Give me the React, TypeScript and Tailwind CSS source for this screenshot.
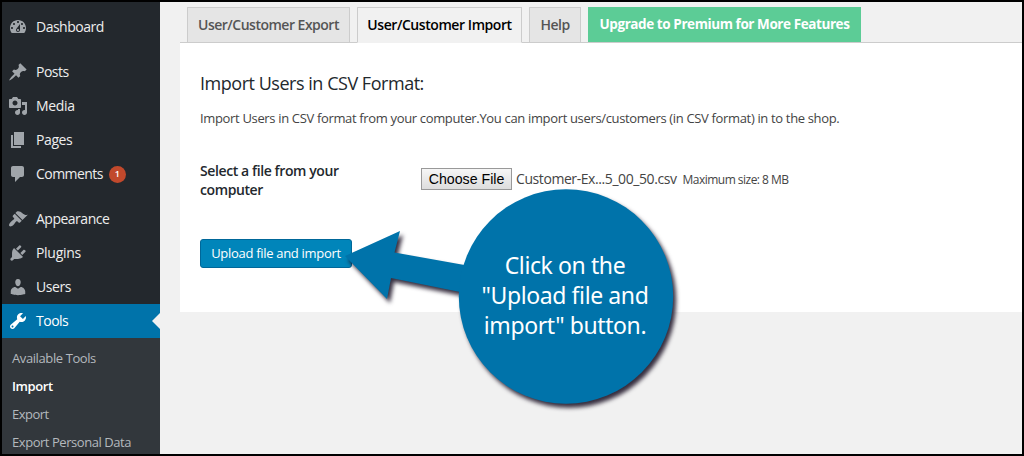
import clsx from "clsx";

type MenuItemType = {
  label: string;
  icon: string;
  tracking: string;
  badge?: number;
  current?: boolean;
};

// 20x20 glyph outlines for the admin menu
const icons = {
  dashboard:
    "M3.76 16h12.48c1.1-1.37 1.76-3.11 1.76-5 0-4.42-3.58-8-8-8s-8 3.58-8 8c0 1.89.66 3.63 1.76 5zM10 4c.55 0 1 .45 1 1s-.45 1-1 1-1-.45-1-1 .45-1 1-1zM6 6c.55 0 1 .45 1 1s-.45 1-1 1-1-.45-1-1 .45-1 1-1zm8 0c.55 0 1 .45 1 1s-.45 1-1 1-1-.45-1-1 .45-1 1-1zm-5.37 5.55L12 7v6c0 1.1-.9 2-2 2s-2-.9-2-2c0-.57.24-1.08.63-1.45zM4 10c.55 0 1 .45 1 1s-.45 1-1 1-1-.45-1-1 .45-1 1-1zm12 0c.55 0 1 .45 1 1s-.45 1-1 1-1-.45-1-1 .45-1 1-1zm-5 3c0-.55-.45-1-1-1s-1 .45-1 1 .45 1 1 1 1-.45 1-1z",
  posts:
    "M10.44 3.02l1.82-1.82 6.36 6.35-1.83 1.82c-1.05-.68-2.48-.57-3.41.36l-.75.75c-.92.93-1.04 2.35-.35 3.41l-1.83 1.82-2.41-2.41-2.8 2.79c-.42.42-3.38 2.71-3.8 2.29s1.86-3.39 2.28-3.81l2.79-2.79L4.1 9.36l1.83-1.82c1.05.69 2.48.57 3.4-.36l.75-.75c.93-.92 1.05-2.35.36-3.41z",
  media:
    "M13 11V4c0-.55-.45-1-1-1h-1.67L9 1H5L3.67 3H2c-.55 0-1 .45-1 1v7c0 .55.45 1 1 1h10c.55 0 1-.45 1-1zM7 4.5c1.38 0 2.5 1.12 2.5 2.5S8.38 9.5 7 9.5 4.5 8.38 4.5 7 5.62 4.5 7 4.5zM14 6h5v10.5c0 1.38-1.12 2.5-2.5 2.5S14 17.88 14 16.5s1.12-2.5 2.5-2.5c.17 0 .34.02.5.05V9h-3V6zm-4 8.05V13h2v3.5c0 1.38-1.12 2.5-2.5 2.5S7 17.88 7 16.5 8.12 14 9.5 14c.17 0 .34.02.5.05z",
  pages: "M6 15V2h10v13H6zm-1 1h8v2H3V5h2v11z",
  comments:
    "M5 2h9c1.1 0 2 .9 2 2v7c0 1.1-.9 2-2 2h-2l-5 5v-5H5c-1.1 0-2-.9-2-2V4c0-1.1.9-2 2-2z",
  appearance:
    "M14.48 11.06L7.41 3.99l1.5-1.5c.5-.56 2.3-.47 3.51.32 1.21.8 1.43 1.28 2.91 2.1 1.18.64 2.45 1.26 4.45.85zm-.71.71L6.7 4.7 4.93 6.47c-.39.39-.39 1.02 0 1.41l1.06 1.06c.39.39.39 1.03 0 1.42-.6.6-1.43 1.11-2.21 1.69-.35.26-.7.53-1.01.84C1.43 14.23.4 16.08 1.4 17.07c.99 1 2.84-.03 4.18-1.36.31-.31.58-.66.85-1.02.57-.78 1.08-1.61 1.69-2.21.39-.39 1.02-.39 1.41 0l1.06 1.06c.39.39 1.02.39 1.41 0z",
  plugins:
    "M13.11 4.36L9.87 7.6 8 5.73l3.24-3.24c.35-.34 1.05-.2 1.56.32.52.51.66 1.21.31 1.55zm-8 1.77l.91-1.12 9.01 9.01-1.19.84c-.71.71-2.63 1.16-3.82 1.16H6.14L4.9 17.26c-.59.59-1.54.59-2.12 0-.59-.58-.59-1.53 0-2.12l1.24-1.24v-3.88c0-1.13.4-3.19 1.09-3.89zm7.26 3.97l3.24-3.24c.34-.35 1.04-.21 1.55.31.52.51.66 1.21.31 1.55l-3.24 3.25z",
  users:
    "M10 9.25c-2.27 0-2.73-3.44-2.73-3.44C7 4.02 7.82 2 9.97 2c2.16 0 2.98 2.02 2.71 3.81 0 0-.41 3.44-2.68 3.44zm0 2.57L12.72 10c2.39 0 4.52 2.33 4.52 4.53v2.49s-3.65 1.13-7.24 1.13c-3.65 0-7.24-1.13-7.24-1.13v-2.49c0-2.25 1.94-4.48 4.47-4.48z",
  tools:
    "M16.68 9.77c-1.34 1.34-3.3 1.67-4.95.99l-5.41 6.52c-.99.99-2.59.99-3.58 0s-.99-2.59 0-3.57l6.52-5.42c-.68-1.65-.35-3.61.99-4.95 1.28-1.28 3.12-1.62 4.72-1.06l-2.89 2.89 2.82 2.82 2.86-2.87c.53 1.58.18 3.39-1.08 4.65zM3.81 16.21c.4.39 1.04.39 1.43 0 .4-.4.4-1.04 0-1.43-.39-.4-1.03-.4-1.43 0-.39.39-.39 1.03 0 1.43z",
};

const menuGroups: MenuItemType[][] = [
  [{ label: "Dashboard", icon: icons.dashboard, tracking: "tracking-[-0.5px]" }],
  [
    { label: "Posts", icon: icons.posts, tracking: "tracking-[-0.5px]" },
    { label: "Media", icon: icons.media, tracking: "tracking-[-0.3px]" },
    { label: "Pages", icon: icons.pages, tracking: "tracking-[-0.4px]" },
    { label: "Comments", icon: icons.comments, tracking: "tracking-[-0.55px]", badge: 1 },
  ],
  [
    { label: "Appearance", icon: icons.appearance, tracking: "tracking-[-0.5px]" },
    { label: "Plugins", icon: icons.plugins, tracking: "tracking-[-0.3px]" },
    { label: "Users", icon: icons.users, tracking: "tracking-[-0.4px]" },
    { label: "Tools", icon: icons.tools, tracking: "tracking-[-0.5px]", current: true },
  ],
];

const subMenu = [
  { label: "Available Tools", tracking: "tracking-[-0.4px]" },
  { label: "Import", tracking: "tracking-[-0.4px]", current: true },
  { label: "Export", tracking: "tracking-[-0.5px]" },
  { label: "Export Personal Data", tracking: "tracking-[-0.45px]" },
];

const MenuItem: React.FC<{ item: MenuItemType }> = ({ item }) => (
  <li
    className={clsx(
      "relative flex h-[34px] items-center pl-1.5 text-sm",
      item.current ? "bg-[#0073aa] text-white" : "text-[#eeeeee]"
    )}
  >
    <svg
      viewBox="0 0 20 20"
      className={clsx("size-5", item.current ? "fill-white" : "fill-[#a0a5aa]")}
    >
      <path d={item.icon} />
    </svg>
    <span className={clsx("ml-2", item.tracking)}>{item.label}</span>
    {item.badge && (
      <span className="ml-1.5 flex size-[17px] items-center justify-center rounded-full bg-[#c1492c] text-[9px] font-semibold text-white">
        {item.badge}
      </span>
    )}
    {item.current && (
      <span className="absolute right-0 border-y-8 border-r-8 border-y-transparent border-r-[#f1f1f1]" />
    )}
  </li>
);

const Sidebar = () => (
  <nav className="flex w-[158px] shrink-0 flex-col bg-[#23282d]">
    <div className="flex flex-col gap-[11px] pt-2">
      {menuGroups.map((group, index) => (
        <ul key={index}>
          {group.map((item) => (
            <MenuItem key={item.label} item={item} />
          ))}
        </ul>
      ))}
    </div>
    <ul className="flex-1 overflow-hidden bg-[#32373c] pt-[7px] text-[13px] text-[#b4b9be]">
      {subMenu.map((item) => (
        <li
          key={item.label}
          className={clsx(
            "flex h-7 items-center pl-2.5 whitespace-nowrap",
            item.tracking,
            item.current && "font-semibold text-white"
          )}
        >
          {item.label}
        </li>
      ))}
    </ul>
  </nav>
);

const Tabs = () => (
  <div className="flex h-[36px] gap-[7px] border-b border-[#cccccc] pl-[7px] text-sm font-semibold whitespace-nowrap">
    <a className="flex h-[36px] w-[163px] items-center justify-center border border-[#cccccc] bg-[#e5e5e5] tracking-[-0.5px] text-[#555555]">
      User/Customer Export
    </a>
    <a className="flex h-[36px] w-[165px] items-center justify-center border border-b-[#f1f1f1] border-[#cccccc] bg-[#f1f1f1] tracking-[-0.43px] text-black">
      User/Customer Import
    </a>
    <a className="flex h-[36px] w-[52px] items-center justify-center border border-[#cccccc] bg-[#e5e5e5] tracking-[-0.5px] text-[#555555]">
      Help
    </a>
    <a className="flex h-[35px] w-[273px] items-center justify-center bg-[#5ccc96] pt-px text-[13.5px] font-bold tracking-[-0.42px] text-white">
      Upgrade to Premium for More Features
    </a>
  </div>
);

const ImportPanel = () => (
  <section className="h-[269px] bg-white pt-7 pl-5 text-[#444444]">
    <h2 className="text-[18px] leading-6 tracking-[-0.47px] text-[#23282d]">
      Import Users in CSV Format:
    </h2>
    <p className="mt-[13px] text-[13px] leading-5 tracking-[-0.34px] whitespace-nowrap">
      Import Users in CSV format from your computer.You can import users/customers (in CSV format) in to the shop.
    </p>
    <div className="mt-[31px] flex">
      <label className="w-[221px] pt-0.5 text-sm leading-[19px] font-semibold tracking-[-0.4px] text-[#23282d]">
        Select a file from your
        <br />
        computer
      </label>
      <div className="flex items-center whitespace-nowrap">
        <button className="h-[22px] w-[91px] border border-[#999999] bg-linear-to-b from-[#f6f6f6] to-[#dddddd] font-['Liberation_Sans',sans-serif] text-[14.2px] leading-5 text-black">
          Choose File
        </button>
        <span className="ml-1 text-sm tracking-[-0.42px]">Customer-Ex...5_00_50.csv</span>
        <small className="ml-1.5 pt-px text-xs tracking-[-0.52px]">Maximum size: 8 MB</small>
      </div>
    </div>
    <button className="mt-10 block h-[29px] w-[152px] rounded-[3px] border border-[#006799] bg-[#0085ba] text-[13px] tracking-[-0.3px] text-white">
      Upload file and import
    </button>
  </section>
);

// speech bubble with an arrow that points to the upload button
const Callout = () => (
  <div className="absolute top-[180px] left-[340px] h-[240px] w-[350px]">
    <svg
      viewBox="340 180 350 240"
      className="absolute inset-0 fill-[#0073aa] drop-shadow-[3px_4px_2px_rgba(20,10,30,0.85)]"
    >
      <path d="M345 256L400 231L394.500 252.500L470 266V294L391 278L387 299Z" />
      <circle cx="566" cy="296.500" r="107.200" />
    </svg>
    <p className="absolute top-[70px] left-[125px] w-[200px] text-center font-['Noto_Sans',sans-serif] text-[23px] leading-[30px] tracking-[-0.4px] whitespace-nowrap text-white">
      Click on the
      <br />
      "Upload file and
      <br />
      import" button.
    </p>
  </div>
);

export default function App() {
  return (
    <div className="relative flex h-[456px] w-[1024px] overflow-hidden border-2 border-black bg-[#f1f1f1] font-['Open_Sans','Noto_Sans',sans-serif]">
      <Sidebar />
      <main className="flex-1 pt-[5px] pl-5">
        <Tabs />
        <ImportPanel />
      </main>
      <div className="absolute -top-0.5 -left-0.5">
        <Callout />
      </div>
    </div>
  );
}
